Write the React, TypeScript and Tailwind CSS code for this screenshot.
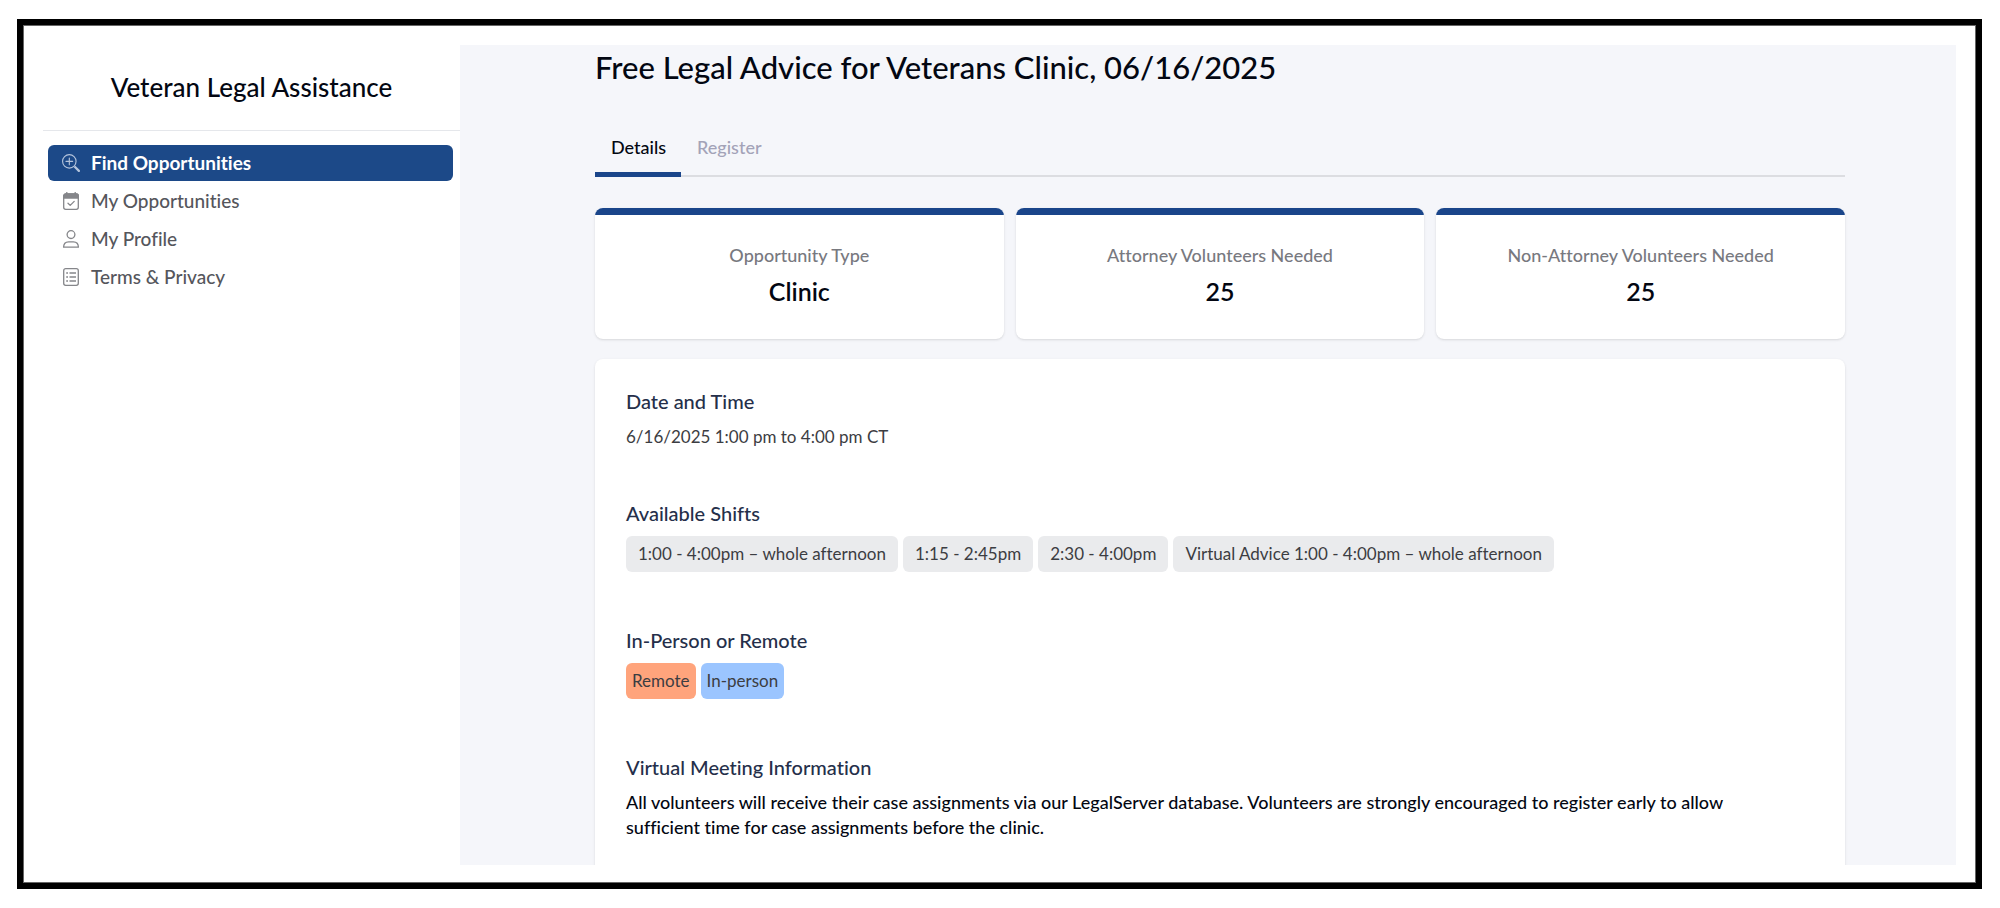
import { ReactNode, useState } from 'react';
import { BsZoomIn } from 'react-icons/bs';
import clsx from 'clsx';

type IconProps = { className?: string };

function CalendarIcon({ className }: IconProps) {
  return (
    <svg viewBox="0 0 18 18" fill="none" stroke="currentColor" strokeWidth="1.3" className={className}>
      <rect x="1.7" y="2" width="14.6" height="15.3" rx="2" />
      <path d="M1.7 6V4a2 2 0 0 1 2-2h10.6a2 2 0 0 1 2 2v2z" fill="currentColor" />
      <path d="M4.8 0v2.5M13.2 0v2.5" />
      <path d="m6 11.2 2.2 2.2 4-4" strokeLinecap="round" strokeLinejoin="round" />
    </svg>
  );
}

function PersonIcon({ className }: IconProps) {
  return (
    <svg viewBox="0 0 18 18" fill="none" stroke="currentColor" strokeWidth="1.3" className={className}>
      <circle cx="9" cy="4.6" r="3.9" />
      <path d="M1.6 17.2c0-3.4 2.2-5.4 5-5.4h4.8c2.8 0 5 2 5 5.4z" strokeLinejoin="round" />
    </svg>
  );
}

function ListIcon({ className }: IconProps) {
  return (
    <svg viewBox="0 0 18 18" fill="none" stroke="currentColor" strokeWidth="1.3" className={className}>
      <rect x="1.7" y="0.7" width="14.6" height="16.6" rx="2" />
      <path d="M4.2 5h1.8M4.2 9h1.8M4.2 13h1.8M7.5 5h6.5M7.5 9h6.5M7.5 13h6.5" />
    </svg>
  );
}

const navItems = [
  { label: 'Find Opportunities', icon: BsZoomIn },
  { label: 'My Opportunities', icon: CalendarIcon },
  { label: 'My Profile', icon: PersonIcon },
  { label: 'Terms & Privacy', icon: ListIcon },
];

const stats = [
  { label: 'Opportunity Type', value: 'Clinic' },
  { label: 'Attorney Volunteers Needed', value: '25' },
  { label: 'Non-Attorney Volunteers Needed', value: '25' },
];

const shifts = [
  '1:00 - 4:00pm – whole afternoon',
  '1:15 - 2:45pm',
  '2:30 - 4:00pm',
  'Virtual Advice 1:00 - 4:00pm – whole afternoon',
];

const tabs = ['Details', 'Register'];

function Sidebar() {
  return (
    <aside className="w-[417px] shrink-0">
      <div className="flex h-[86px] items-center justify-center border-b border-gray-200">
        <p className="text-[26px] font-medium text-gray-950">Veteran Legal Assistance</p>
      </div>
      <nav className="flex flex-col gap-0.5 py-[14px] pr-[7px] pl-[5px]">
        {navItems.map(({ label, icon: Icon }, index) => (
          <a
            key={label}
            href="#"
            className={clsx(
              'flex h-9 items-center gap-[11px] rounded-md px-3.5 text-[19px]',
              index === 0 ? 'bg-[#1c4988] font-bold text-white' : 'font-medium text-[#55565c]'
            )}
          >
            <Icon className={clsx('size-[18px]', index === 0 ? 'text-[#b4c4dc]' : 'text-[#85868a]')} />
            {label}
          </a>
        ))}
      </nav>
    </aside>
  );
}

function Section({ title, children }: { title: string; children: ReactNode }) {
  return (
    <section className="pb-[49px]">
      <h2 className="mb-[9px] text-xl leading-7 font-medium text-[#252f4a]">{title}</h2>
      {children}
    </section>
  );
}

export default function App() {
  const [activeTab, setActiveTab] = useState('Details');

  return (
    <div className="h-screen bg-white pt-[19px] pr-[18px] pb-[19px] pl-[17px] font-[Lato,sans-serif] [font-variant-ligatures:none]">
      <div className="flex h-full border-[6px] border-black pt-5 pr-5 pb-[18px] pl-5 inset-shadow-[0_0_0_1px_#666]">
        <Sidebar />

        <main className="flex min-w-0 flex-1 flex-col overflow-hidden bg-[#f5f6fa] pr-[111px] pl-[135px]">
          <h1 className="mt-0.5 text-[31px] leading-10 font-medium text-gray-950">
            Free Legal Advice for Veterans Clinic, 06/16/2025
          </h1>

          <div role="tablist" className="mt-[38px] flex border-b-2 border-[#dcdde1]">
            {tabs.map((tab) => (
              <button
                key={tab}
                role="tab"
                aria-selected={activeTab === tab}
                onClick={() => setActiveTab(tab)}
                className={clsx(
                  '-mb-0.5 h-[52px] border-b-5 pr-[15px] pl-4 pb-1 text-lg font-medium',
                  activeTab === tab ? 'border-[#1a458a] text-gray-950' : 'border-transparent text-[#a3a3b8]'
                )}
              >
                {tab}
              </button>
            ))}
          </div>

          <div className="mt-[31px] grid grid-cols-3 gap-3">
            {stats.map((stat) => (
              <div
                key={stat.label}
                className="h-[131px] overflow-hidden rounded-lg bg-white text-center shadow"
              >
                <div className="h-[7px] bg-[#1a458a]" />
                <p className="mt-7 text-lg leading-6 font-medium text-[#78797f]">{stat.label}</p>
                <p className="mt-2 text-[25px] leading-8 font-semibold text-gray-950">{stat.value}</p>
              </div>
            ))}
          </div>

          <div className="mt-5 flex-1 rounded-t-lg bg-white px-[31px] pt-7 shadow">
            <Section title="Date and Time">
              <p className="text-[17px] leading-[26px] text-[#3c3d42]">6/16/2025 1:00 pm to 4:00 pm CT</p>
            </Section>

            <Section title="Available Shifts">
              <ul className="flex gap-[5px] pb-[5px]">
                {shifts.map((shift) => (
                  <li
                    key={shift}
                    className="flex h-9 items-center rounded-md bg-[#eaebed] px-3 text-[17px] whitespace-nowrap text-[#3c3d42]"
                  >
                    {shift}
                  </li>
                ))}
              </ul>
            </Section>

            <Section title="In-Person or Remote">
              <div className="flex gap-[5px] pb-[5px] text-[17px] text-[#3c3d42]">
                <span className="flex h-9 items-center rounded-md bg-[#ffa47c] px-1.5">Remote</span>
                <span className="flex h-9 items-center rounded-md bg-[#9bc5ff] px-1.5">In-person</span>
              </div>
            </Section>

            <Section title="Virtual Meeting Information">
              <p className="pr-11 text-lg leading-[25px] font-medium text-gray-950">
                All volunteers will receive their case assignments via our LegalServer database. Volunteers are strongly
                encouraged to register early to allow sufficient time for case assignments before the clinic.
              </p>
            </Section>
          </div>
        </main>
      </div>
    </div>
  );
}
